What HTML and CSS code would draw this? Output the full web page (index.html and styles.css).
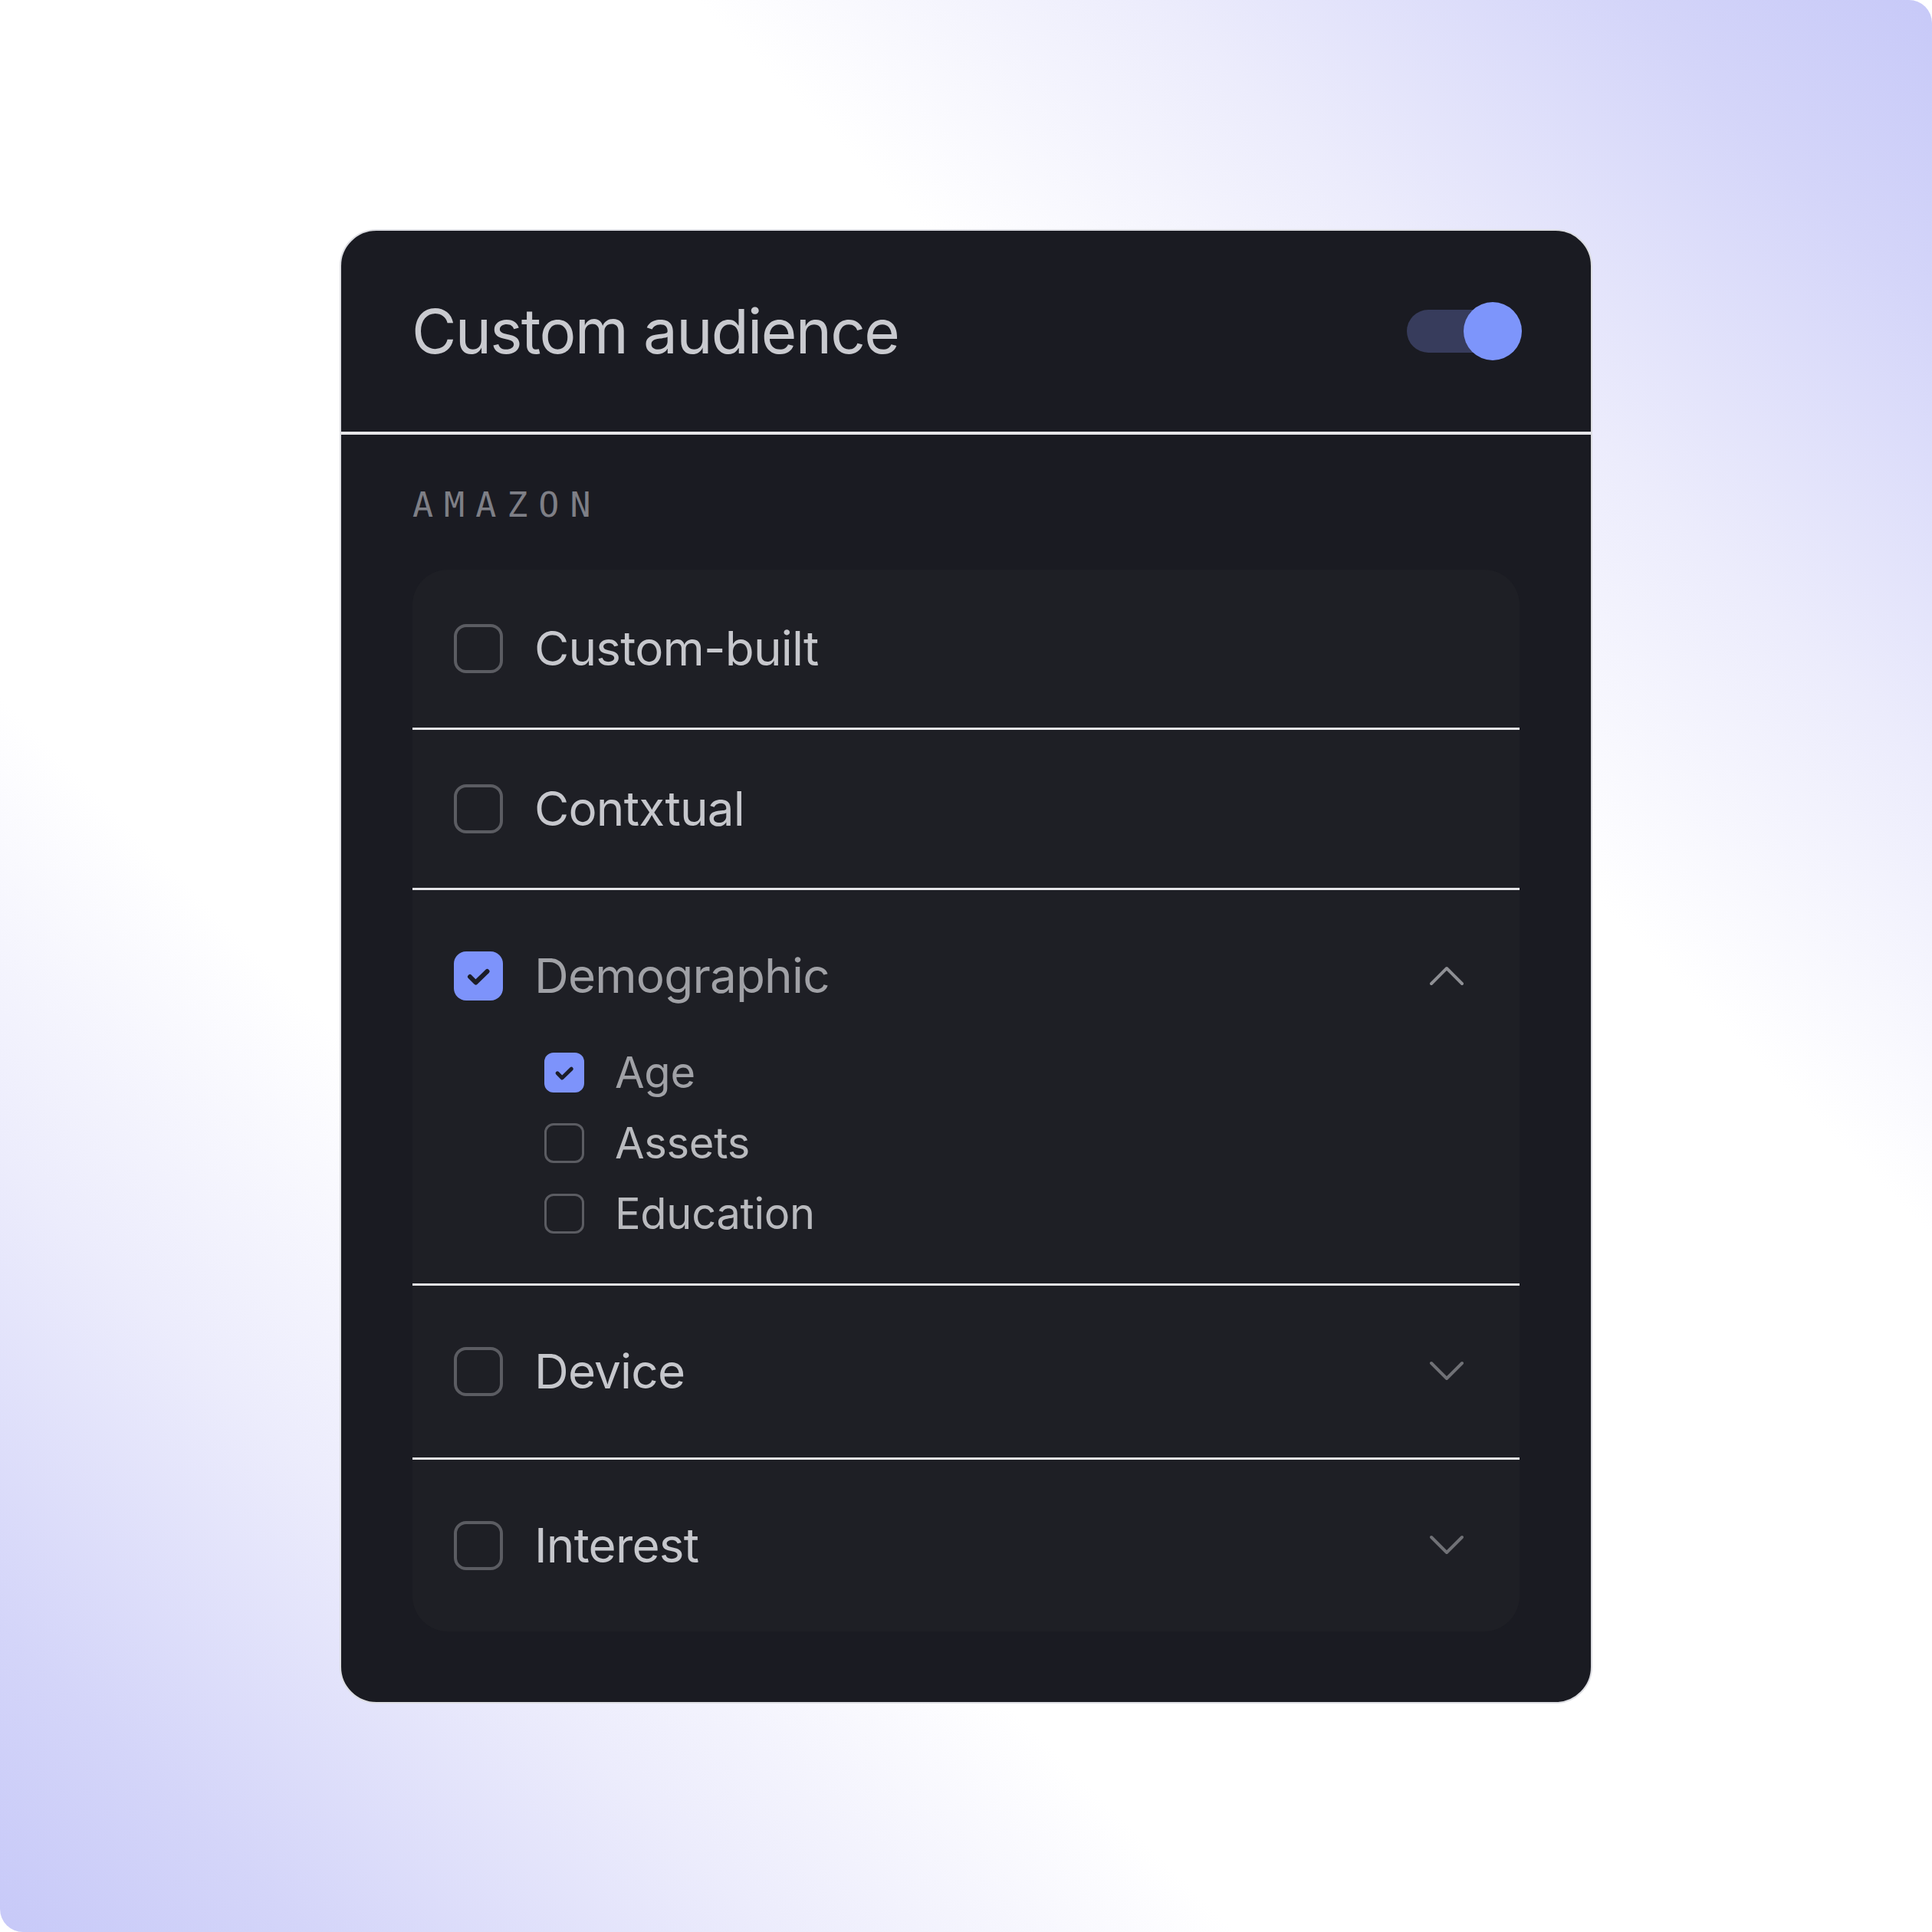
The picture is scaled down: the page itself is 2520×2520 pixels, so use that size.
FILE: index.html
```html
<!DOCTYPE html>
<html lang="en">
<head>
  <meta charset="UTF-8" />
  <meta name="viewport" content="width=device-width, initial-scale=1.0"/>
  <title>Custom audience</title>
  <link rel="stylesheet" href="styles.css">
</head>
<body>
  <div class="backdrop">
    <div class="audience-card">
      <div class="card-header">
        <h2>Custom audience</h2>
        <div class="toggle on">
          <span class="toggle-track"></span>
          <span class="toggle-knob"></span>
        </div>
      </div>

      <div class="card-body">
        <div class="source-label">AMAZON</div>

        <div class="options">
          <div class="option">
            <div class="option-head">
              <span class="check"></span>
              <span class="option-name">Custom-built</span>
            </div>
          </div>

          <div class="option">
            <div class="option-head">
              <span class="check"></span>
              <span class="option-name">Contxtual</span>
            </div>
          </div>

          <div class="option open">
            <div class="option-head">
              <span class="check checked">
                <svg viewBox="0 0 64 64"><path d="M21 33l7.5 7.5L43.5 26"/></svg>
              </span>
              <span class="option-name">Demographic</span>
              <span class="chevron">
                <svg viewBox="0 0 46 27"><path d="M3 24L23 4l20 20"/></svg>
              </span>
            </div>
            <ul class="sub-options">
              <li class="active">
                <span class="check small checked">
                  <svg viewBox="0 0 64 64"><path d="M21 33l7.5 7.5L43.5 26"/></svg>
                </span>
                Age
              </li>
              <li>
                <span class="check small"></span>
                Assets
              </li>
              <li>
                <span class="check small"></span>
                Education
              </li>
            </ul>
          </div>

          <div class="option">
            <div class="option-head">
              <span class="check"></span>
              <span class="option-name">Device</span>
              <span class="chevron down">
                <svg viewBox="0 0 46 27"><path d="M3 3l20 20L43 3"/></svg>
              </span>
            </div>
          </div>

          <div class="option">
            <div class="option-head">
              <span class="check"></span>
              <span class="option-name">Interest</span>
              <span class="chevron down">
                <svg viewBox="0 0 46 27"><path d="M3 3l20 20L43 3"/></svg>
              </span>
            </div>
          </div>
        </div>
      </div>
    </div>
  </div>
</body>
</html>
```

FILE: styles.css
```css
* {
  box-sizing: border-box;
  margin: 0;
  padding: 0;
}

body {
  font-family: Inter, 'Noto Sans', sans-serif;
  background: #fff;
}

.backdrop {
  width: 2520px;
  height: 2520px;
  border-radius: 30px;
  background: linear-gradient(225deg,
    #c7c9f8 0%, #d4d5f9 8%, #ececfc 20%, #fff 32%,
    #fff 68%, #ececfc 80%, #d4d5f9 92%, #c7c9f8 100%);
  display: flex;
  justify-content: center;
  align-items: center;
}

.audience-card {
  width: 1634px;
  background: #1a1b22;
  border: 2px solid #dcdde2;
  border-radius: 48px;
  overflow: hidden;
}

.card-header {
  height: 266px;
  padding: 0 90px 0 92px;
  display: flex;
  justify-content: space-between;
  align-items: center;
  border-bottom: 4px solid #e6e6e9;
}

h2 {
  color: #c9cacf;
  font-size: 80px;
  font-weight: 400;
  letter-spacing: -1.7px;
}

/* on/off switch, knob sits past the end of the track */
.toggle {
  position: relative;
  width: 150px;
  height: 76px;
  display: flex;
  align-items: center;
}

.toggle-track {
  width: 140px;
  height: 56px;
  border-radius: 28px;
  background: #373c5c;
}

.toggle-knob {
  position: absolute;
  right: 0;
  top: 0;
  width: 76px;
  height: 76px;
  border-radius: 50%;
  background: #7d95fb;
}

.card-body {
  padding: 69px 93px 92px;
}

.source-label {
  font-family: 'DejaVu Sans Mono', monospace;
  font-size: 45px;
  line-height: 45px;
  letter-spacing: 14px;
  color: #7e7f86;
  margin-bottom: 62px;
}

.options {
  background: #1e1f25;
  border-radius: 46px;
  overflow: hidden;
}

.option {
  padding: 71px 54px;
  border-bottom: 3px solid #e4e4e7;
}

.option:last-child {
  border-bottom: none;
}

.option.open {
  padding-bottom: 59px;
}

.option-head {
  display: flex;
  align-items: center;
  gap: 41px;
}

.option-name {
  flex: 1;
  color: #c6c7cc;
  font-size: 62px;
  line-height: 64px;
  letter-spacing: -0.8px;
}

.option.open .option-name {
  color: #a0a1a6;
}

.check {
  width: 64px;
  height: 64px;
  flex-shrink: 0;
  border: 4px solid #5b5c62;
  border-radius: 16px;
  display: flex;
  align-items: center;
  justify-content: center;
}

.check.small {
  width: 52px;
  height: 52px;
  border-width: 3px;
  border-radius: 12px;
}

.check.checked {
  border: none;
  background: #7d93fb;
}

.check svg {
  width: 100%;
  height: 100%;
  fill: none;
  stroke: #1c1d27;
  stroke-width: 6;
  stroke-linecap: round;
  stroke-linejoin: round;
}

.chevron {
  width: 82px;
  height: 82px;
  display: flex;
  align-items: center;
  justify-content: center;
}

.chevron svg {
  width: 46px;
  height: 27px;
  fill: none;
  stroke: #8e8f94;
  stroke-width: 4;
  stroke-linecap: round;
  stroke-linejoin: round;
}

.chevron.down svg {
  stroke: #707176;
}

.sub-options {
  list-style: none;
  margin: 53px 0 0 118px;
  display: flex;
  flex-direction: column;
  gap: 28px;
}

.sub-options li {
  height: 64px;
  display: flex;
  align-items: center;
  gap: 40px;
  font-size: 56px;
  letter-spacing: -0.3px;
  color: #b9babe;
}

.sub-options li.active {
  color: #a0a1a6;
}
```
